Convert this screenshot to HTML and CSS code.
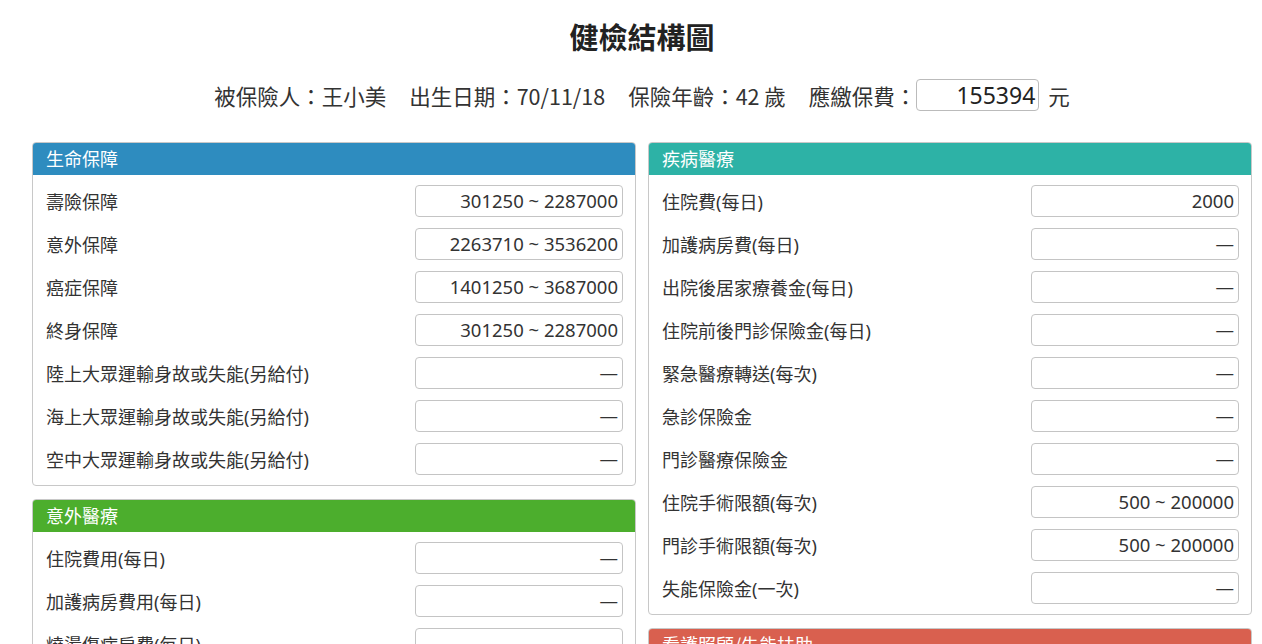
FILE: index.html
```html
<!DOCTYPE html>
<html lang="zh-Hant">
<head>
<meta charset="utf-8">
<title>健檢結構圖</title>
<link rel="stylesheet" href="styles.css">
</head>
<body>
<div class="page">
  <h1 class="title">健檢結構圖</h1>
  <div class="info">
    <span class="info-item">被保險人：王小美</span>
    <span class="info-item">出生日期：70/11/18</span>
    <span class="info-item">保險年齡：42 歲</span>
    <span class="info-item">應繳保費：<span class="info-box">155394</span>元</span>
  </div>
  <div class="columns">
    <div class="col">
      <div class="panel">
        <div class="panel-head blue">生命保障</div>
        <div class="panel-body">
          <div class="row"><span class="label">壽險保障</span><span class="val">301250 ~ 2287000</span></div>
          <div class="row"><span class="label">意外保障</span><span class="val">2263710 ~ 3536200</span></div>
          <div class="row"><span class="label">癌症保障</span><span class="val">1401250 ~ 3687000</span></div>
          <div class="row"><span class="label">終身保障</span><span class="val">301250 ~ 2287000</span></div>
          <div class="row"><span class="label">陸上大眾運輸身故或失能(另給付)</span><span class="val">—</span></div>
          <div class="row"><span class="label">海上大眾運輸身故或失能(另給付)</span><span class="val">—</span></div>
          <div class="row"><span class="label">空中大眾運輸身故或失能(另給付)</span><span class="val">—</span></div>
        </div>
      </div>
      <div class="panel">
        <div class="panel-head green">意外醫療</div>
        <div class="panel-body">
          <div class="row"><span class="label">住院費用(每日)</span><span class="val">—</span></div>
          <div class="row"><span class="label">加護病房費用(每日)</span><span class="val">—</span></div>
          <div class="row"><span class="label">燒燙傷病房費(每日)</span><span class="val">—</span></div>
          <div class="row"><span class="label">門診費用(每次)</span><span class="val">—</span></div>
        </div>
      </div>
    </div>
    <div class="col">
      <div class="panel">
        <div class="panel-head teal">疾病醫療</div>
        <div class="panel-body">
          <div class="row"><span class="label">住院費(每日)</span><span class="val">2000</span></div>
          <div class="row"><span class="label">加護病房費(每日)</span><span class="val">—</span></div>
          <div class="row"><span class="label">出院後居家療養金(每日)</span><span class="val">—</span></div>
          <div class="row"><span class="label">住院前後門診保險金(每日)</span><span class="val">—</span></div>
          <div class="row"><span class="label">緊急醫療轉送(每次)</span><span class="val">—</span></div>
          <div class="row"><span class="label">急診保險金</span><span class="val">—</span></div>
          <div class="row"><span class="label">門診醫療保險金</span><span class="val">—</span></div>
          <div class="row"><span class="label">住院手術限額(每次)</span><span class="val">500 ~ 200000</span></div>
          <div class="row"><span class="label">門診手術限額(每次)</span><span class="val">500 ~ 200000</span></div>
          <div class="row"><span class="label">失能保險金(一次)</span><span class="val">—</span></div>
        </div>
      </div>
      <div class="panel">
        <div class="panel-head red">看護照顧/失能扶助</div>
        <div class="panel-body">
          <div class="row"><span class="label">長期看護(每月)</span><span class="val">—</span></div>
          <div class="row"><span class="label">失能扶助(每月)</span><span class="val">—</span></div>
        </div>
      </div>
    </div>
  </div>
</div>
</body>
</html>
```

FILE: styles.css
```css
* { box-sizing: border-box; }
html, body { margin: 0; padding: 0; background: #fff; }
body {
  font-family: "Noto Sans", "Noto Sans CJK TC", sans-serif;
  color: #333;
}
.page {
  padding: 0 10px 20px 32px;
}
.title {
  margin: 0;
  padding-top: 18px;
  height: 60px;
  line-height: 40px;
  font-size: 29px;
  font-weight: 700;
  text-align: center;
  color: #222;
}
.info {
  display: flex;
  justify-content: center;
  align-items: center;
  gap: 23px;
  height: 82px;
  padding-top: 10px;
  padding-bottom: 22px;
  font-size: 21.5px;
  color: #333;
  font-family: "Noto Sans CJK TC", sans-serif;
}
.info-item { white-space: nowrap; display: flex; align-items: center; }
.info-box {
  display: inline-block;
  width: 123px;
  height: 32px;
  line-height: 30px;
  border: 1px solid #bbb;
  border-radius: 4px;
  text-align: right;
  padding-right: 3px;
  font-size: 23px;
  margin-right: 9px;
  font-family: "Noto Sans", sans-serif;
  color: #222;
}
.columns {
  display: grid;
  grid-template-columns: 604px 604px;
  gap: 12px;
  width: 1220px;
}
.col { display: flex; flex-direction: column; gap: 13px; }
.panel {
  border: 1px solid #c8c8c8;
  border-radius: 4px;
  overflow: hidden;
}
.panel-head {
  height: 32px;
  line-height: 31px;
  padding-left: 13px;
  color: #fff;
  font-size: 18px;
  font-family: "Noto Sans CJK TC", sans-serif;
}
.blue { background: #2e8cbf; }
.teal { background: #2db2a6; }
.green { background: #4cae2d; }
.red { background: #d9604f; }
.panel-body {
  padding: 10px 12px 10px 13px;
  display: flex;
  flex-direction: column;
  gap: 11px;
}
.row {
  display: flex;
  align-items: center;
  justify-content: space-between;
  height: 32px;
}
.label {
  font-size: 18px;
  font-family: "Noto Sans", "Noto Sans CJK TC", sans-serif;
  color: #333;
}
.val {
  width: 208px;
  height: 32px;
  line-height: 30px;
  border: 1px solid #c4c4c4;
  border-radius: 4px;
  text-align: right;
  padding-right: 4px;
  font-size: 18.5px;
  color: #333;
}
```
